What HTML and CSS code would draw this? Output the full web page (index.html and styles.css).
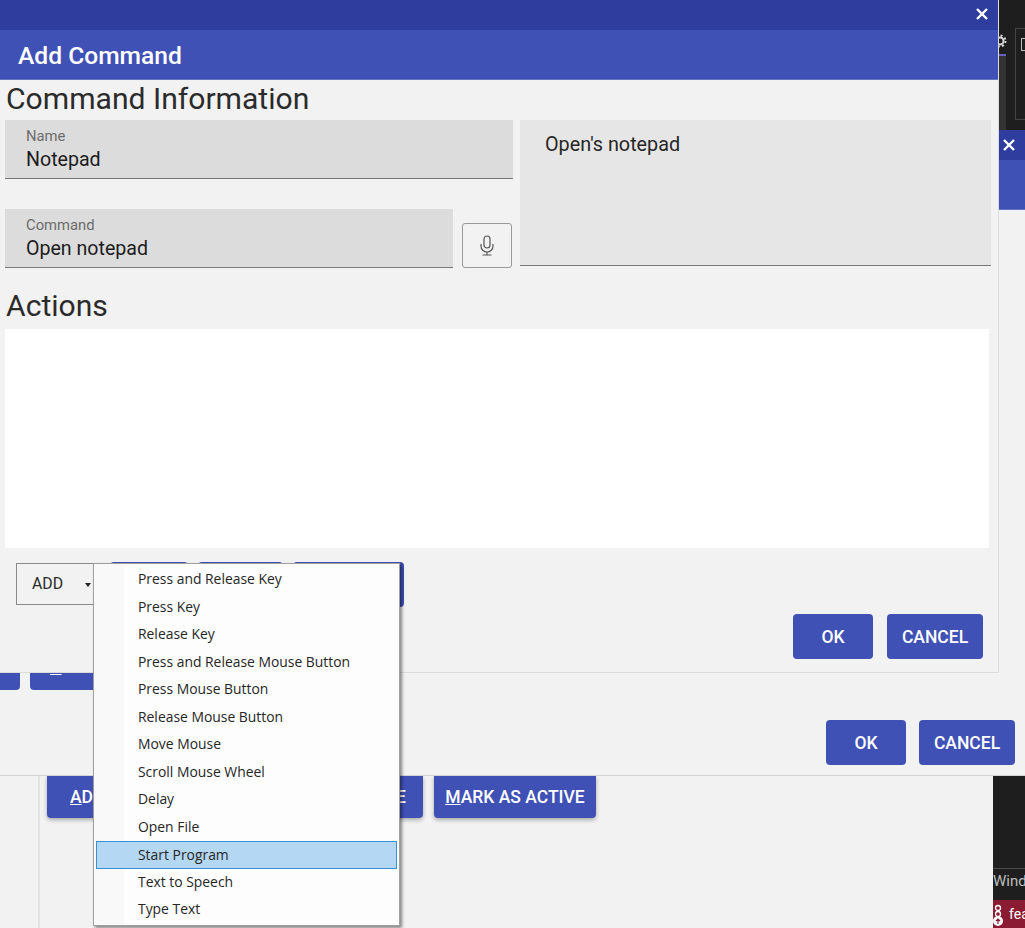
FILE: index.html
```html
<!DOCTYPE html>
<html>
<head>
  <title>Add Command</title>
  <link rel="stylesheet" href="styles.css">
</head>
<body>
  <div class="desktop">

    <!-- editor behind the dialogs -->
    <div class="editor-top">
      <svg class="gear" width="14" height="14" viewBox="0 0 14 14">
        <circle cx="7" cy="7" r="3.5" fill="none" stroke="#d8d8d8" stroke-width="2"/>
        <circle cx="7" cy="7" r="5.5" fill="none" stroke="#d8d8d8" stroke-width="2" stroke-dasharray="2 2.3"/>
      </svg>
      <div class="editor-tab"></div>
      <div class="editor-side"><span class="editor-glyph"></span></div>
    </div>
    <div class="editor-bottom">
      <div class="editor-term">Wind</div>
      <div class="editor-status">
        <svg width="13" height="26" viewBox="0 0 13 26">
          <circle cx="5" cy="7" r="2.5" fill="none" stroke="#fff" stroke-width="1.3"/>
          <circle cx="5" cy="13" r="2.5" fill="none" stroke="#fff" stroke-width="1.3"/>
          <circle cx="5" cy="20" r="5" fill="#fff"/>
          <path d="M5 23v-5M3 20l2-2 2 2" fill="none" stroke="#8a1b33" stroke-width="1.2"/>
        </svg>
        <span>fea</span>
      </div>
    </div>

    <!-- main window, bottom -->
    <div class="window window-back">
      <div class="back-rail"></div>
      <div class="button-row back-actions">
        <button class="btn btn-raised btn-add"><u>A</u>DD</button>
        <button class="btn btn-raised btn-remove">REMOVE</button>
        <button class="btn btn-raised btn-active"><u>M</u>ARK AS ACTIVE</button>
      </div>
    </div>

    <!-- profile dialog -->
    <div class="window window-mid">
      <div class="titlebar">
        <svg class="close" width="12" height="12" viewBox="0 0 12 12"><path d="M1 1l10 10M11 1L1 11" stroke="#fff" stroke-width="2.4"/></svg>
      </div>
      <div class="dialog-head"></div>
      <div class="dialog-body mid-body">
        <div class="button-row mid-actions">
          <button class="btn btn-cut"></button>
          <button class="btn btn-under"><u>A</u>DD</button>
        </div>
        <div class="dialog-foot">
          <button class="btn btn-ok">OK</button>
          <button class="btn btn-cancel">CANCEL</button>
        </div>
      </div>
    </div>

    <!-- add command dialog -->
    <div class="window window-front">
      <div class="titlebar">
        <svg class="close" width="12" height="12" viewBox="0 0 12 12"><path d="M1 1l10 10M11 1L1 11" stroke="#fff" stroke-width="2.4"/></svg>
      </div>
      <div class="dialog-head"><h1>Add Command</h1></div>
      <div class="dialog-body front-body">
        <h2 class="section-title">Command Information</h2>
        <div class="info-grid">
          <div class="info-left">
            <div class="field">
              <label>Name</label>
              <div class="field-value">Notepad</div>
            </div>
            <div class="command-row">
              <div class="field field-command">
                <label>Command</label>
                <div class="field-value">Open notepad</div>
              </div>
              <button class="mic-btn">
                <svg width="16" height="21" viewBox="0 0 16 21" fill="none" stroke="#555" stroke-width="1.2">
                  <rect x="5" y="1" width="6" height="12" rx="3"/>
                  <path d="M2 9v2a6 6 0 0 0 12 0V9M8 17v3M3.500 20h9"/>
                </svg>
              </button>
            </div>
          </div>
          <div class="description">Open's notepad</div>
        </div>
        <h2 class="section-title actions-title">Actions</h2>
        <div class="action-list"></div>
        <div class="action-row">
          <div class="add-select">ADD<span class="caret"></span></div>
          <button class="btn btn-hidden-one"></button>
          <button class="btn btn-hidden-two"></button>
          <button class="btn btn-hidden-three"></button>
        </div>
        <div class="dialog-foot front-foot">
          <button class="btn btn-ok">OK</button>
          <button class="btn btn-cancel">CANCEL</button>
        </div>
      </div>
    </div>

    <!-- open context menu -->
    <ul class="menu">
      <li>Press and Release Key</li>
      <li>Press Key</li>
      <li>Release Key</li>
      <li>Press and Release Mouse Button</li>
      <li>Press Mouse Button</li>
      <li>Release Mouse Button</li>
      <li>Move Mouse</li>
      <li>Scroll Mouse Wheel</li>
      <li>Delay</li>
      <li>Open File</li>
      <li class="selected">Start Program</li>
      <li>Text to Speech</li>
      <li>Type Text</li>
    </ul>
  </div>
</body>
</html>
```

FILE: styles.css
```css
html, body {
  margin: 0;
  padding: 0;
}

body {
  font-family: Roboto, Arial, sans-serif;
  background-color: #1e1e1e;
}

.desktop {
  position: relative;
  width: 1025px;
  height: 928px;
  overflow: hidden;
  background-color: #1e1e1e;
}

/* Editor pieces showing round the dialogs */
.editor-top {
  position: absolute;
  left: 990px;
  top: 0;
  width: 35px;
  height: 130px;
}

.gear {
  position: absolute;
  left: 3px;
  top: 34px;
}

.editor-tab {
  position: absolute;
  left: 8px;
  top: 54px;
  width: 8px;
  height: 76px;
  border-top: 2px solid #6a5fc0;
  background-color: #333;
  box-sizing: border-box;
}

.editor-side {
  position: absolute;
  left: 25px;
  top: 28px;
  width: 10px;
  height: 90px;
  border-left: 1px solid #444;
  border-top: 1px solid #444;
  border-bottom: 1px solid #444;
}

.editor-glyph {
  display: block;
  margin: 9px 0 0 5px;
  width: 5px;
  height: 11px;
  border: 1px solid #bbb;
  border-right: none;
}

.editor-bottom {
  position: absolute;
  left: 993px;
  top: 776px;
  width: 32px;
  height: 152px;
  display: flex;
  flex-direction: column;
  justify-content: flex-end;
}

.editor-term {
  height: 31px;
  border-top: 1px solid #4a4a4a;
  color: #bdbdbd;
  font-size: 15px;
  line-height: 25px;
  white-space: nowrap;
  overflow: hidden;
}

.editor-status {
  height: 28px;
  display: flex;
  align-items: center;
  gap: 3px;
  background-color: #8a1b33;
  color: #fff;
  font-size: 14px;
  white-space: nowrap;
  overflow: hidden;
}

.editor-status svg {
  flex: none;
}

/* Windows */
.window {
  position: absolute;
  background-color: #f2f2f2;
  box-sizing: border-box;
}

.window-back {
  left: 0;
  top: 776px;
  width: 993px;
  height: 152px;
}

.back-rail {
  position: absolute;
  left: 38px;
  top: 0;
  width: 2px;
  height: 152px;
  background-color: #e2e2e2;
}

.window-mid {
  left: 0;
  top: 130px;
  width: 1025px;
  height: 646px;
  display: flex;
  flex-direction: column;
  border-bottom: 1px solid #d4d4d4;
}

.window-front {
  left: 0;
  top: 0;
  width: 999px;
  height: 673px;
  display: flex;
  flex-direction: column;
  border-right: 1px solid #dcdcdc;
  border-bottom: 1px solid #dcdcdc;
}

.titlebar {
  flex: none;
  height: 30px;
  background-color: #2f3d9e;
  display: flex;
  align-items: center;
  justify-content: flex-end;
  padding-right: 10px;
}

.window-front .close {
  margin-bottom: 2px;
}

.dialog-head {
  flex: none;
  height: 50px;
  box-sizing: border-box;
  background-color: #3f51b5;
  border-bottom: 1px solid #6573c3;
  padding-left: 18px;
}

.dialog-head h1 {
  margin: 0;
  color: #fff;
  font-size: 24.600px;
  font-weight: 500;
  line-height: 52px;
}

.dialog-body {
  flex: 1;
  min-height: 0;
  display: flex;
  flex-direction: column;
}

/* Command information */
.front-body {
  padding: 0 7px 0 5px;
}

.section-title {
  margin: 0;
  height: 40px;
  padding-left: 1px;
  color: #2b2b2b;
  font-size: 30.100px;
  font-weight: 400;
  line-height: 37px;
}

.info-grid {
  display: grid;
  grid-template-columns: 508px 471px;
  gap: 7px;
  height: 148px;
}

.info-left {
  display: flex;
  flex-direction: column;
  gap: 30px;
}

.field {
  height: 59px;
  box-sizing: border-box;
  padding: 8px 0 0 21px;
  background-color: #dcdcdc;
  border-bottom: 1.500px solid #777;
}

.field label {
  display: block;
  color: #6c6c6c;
  font-size: 14.800px;
  line-height: 16px;
}

.field-value {
  color: #1c1c1c;
  font-size: 19.600px;
  line-height: 31px;
}

.command-row {
  display: flex;
  align-items: flex-end;
  gap: 9px;
}

.field-command {
  flex: none;
  width: 448px;
}

.mic-btn {
  width: 50px;
  height: 45px;
  padding: 0;
  display: flex;
  align-items: center;
  justify-content: center;
  background-color: #f2f2f2;
  border: 1px solid #999;
  border-radius: 3px;
}

.description {
  height: 146px;
  box-sizing: border-box;
  padding: 10px 25px;
  background-color: #e6e6e6;
  border-bottom: 1.500px solid #777;
  color: #262626;
  font-size: 19.800px;
  line-height: 30px;
}

.actions-title {
  margin-top: 18px;
  height: 43px;
  line-height: 40px;
}

.action-list {
  height: 219px;
  width: 984px;
  background-color: #fff;
}

.action-row {
  display: flex;
  align-items: flex-start;
  gap: 10px;
  margin: 14px 0 0 11px;
}

.add-select {
  width: 78px;
  height: 42px;
  margin: 1px 6px 0 0;
  box-sizing: border-box;
  padding-left: 15px;
  border: 1px solid #8a8a8a;
  color: #2b2b2b;
  font-size: 15.800px;
  line-height: 40px;
}

.caret {
  display: inline-block;
  margin-left: 22px;
  vertical-align: middle;
  border-left: 3.500px solid transparent;
  border-right: 3.500px solid transparent;
  border-top: 4px solid #222;
}

.btn {
  height: 45px;
  padding: 0;
  border: none;
  border-radius: 4px;
  background-color: #3f51b5;
  color: #fff;
  font-family: Roboto, Arial, sans-serif;
  font-size: 17.500px;
  font-weight: 500;
}

.btn-hidden-one {
  width: 78px;
}

.btn-hidden-two {
  width: 85px;
}

.btn-hidden-three {
  width: 111px;
}

.dialog-foot {
  display: flex;
  justify-content: flex-end;
  gap: 13px;
  padding: 0 10px 10px 0;
}

.front-foot {
  margin-top: auto;
  gap: 14px;
  padding: 0 8px 13px 0;
}

.btn-ok {
  width: 80px;
}

.btn-cancel {
  width: 96px;
}

/* Buttons of the dialog below */
.mid-body {
  justify-content: flex-end;
}

.button-row {
  display: flex;
}

.mid-actions {
  gap: 10px;
  margin: 0 0 30px -60px;
}

.btn-cut {
  width: 80px;
  height: 44px;
}

.btn-under {
  width: 110px;
  height: 44px;
  text-align: left;
  padding: 0 0 2px 20px;
}

.back-actions {
  gap: 11px;
  margin-left: 47px;
}

.btn-raised {
  position: relative;
  height: 42px;
  padding-bottom: 1px;
  border-radius: 0 0 4px 4px;
  box-shadow: 0 2px 4px rgba(0, 0, 0, 0.3);
}

.btn-add {
  width: 150px;
  text-align: left;
  padding-left: 23px;
}

.btn-remove {
  width: 215px;
  text-align: right;
  padding-right: 17px;
}

.btn-active {
  width: 162px;
}

/* Context menu */
.menu {
  position: absolute;
  left: 93px;
  top: 563px;
  width: 307px;
  height: 363px;
  box-sizing: border-box;
  margin: 0;
  padding: 2px 2px 1px;
  list-style: none;
  background: linear-gradient(to right, #f9f9f9 30px, #fdfdfd 30px);
  border: 1px solid #a0a0a0;
  box-shadow: 2px 2px 3px rgba(0, 0, 0, 0.45);
  font-family: "Open Sans", sans-serif;
  font-size: 13.900px;
  color: #262626;
}

.menu li {
  height: 27.500px;
  box-sizing: border-box;
  padding-left: 42px;
  line-height: 26px;
  white-space: nowrap;
}

.menu li.selected {
  background-color: #b4d7f3;
  border: 1px solid #3a8fd0;
  padding-left: 41px;
  line-height: 25px;
}
```
